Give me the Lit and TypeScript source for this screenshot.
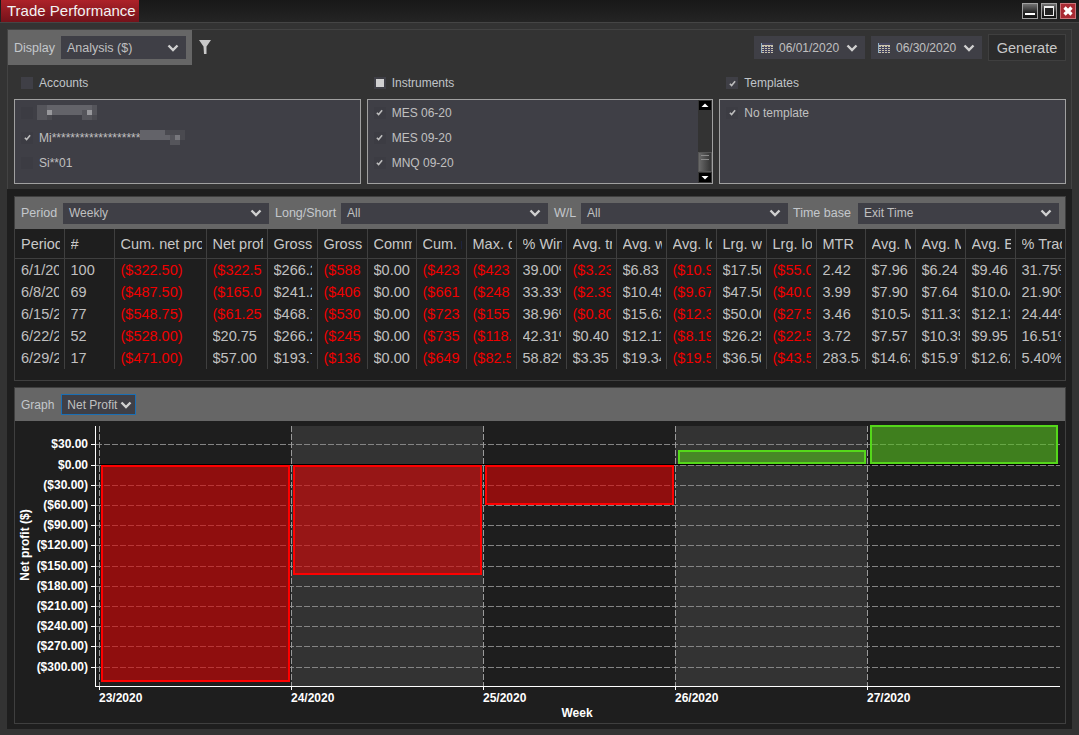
import { LitElement, css, html, svg } from 'lit';
import { customElement } from 'lit/decorators.js';

const widths = [49, 50, 92, 61, 50, 50, 49, 50, 50, 50, 50, 50, 50, 50, 50, 49, 50, 50, 50, 51];
const headers = ['Period', '#', 'Cum. net profit', 'Net profit', 'Gross profit', 'Gross loss', 'Commission', 'Cum. max', 'Max. drawdown', '% Win', 'Avg. trade', 'Avg. winner', 'Avg. loser', 'Lrg. winner', 'Lrg. loser', 'MTR', 'Avg. MAE', 'Avg. MFE', 'Avg. ETD', '% Trade'];
const rows = [
  ['6/1/2020', '100', '($322.50)', '($322.50)', '$266.25', '($588.75)', '$0.00', '($423.75)', '($423.75)', '39.00%', '($3.23)', '$6.83', '($10.95)', '$17.50', '($55.00)', '2.42', '$7.96', '$6.24', '$9.46', '31.75%'],
  ['6/8/2020', '69', '($487.50)', '($165.00)', '$241.25', '($406.25)', '$0.00', '($661.00)', '($248.75)', '33.33%', '($2.39)', '$10.49', '($9.67)', '$47.50', '($40.00)', '3.99', '$7.90', '$7.64', '$10.04', '21.90%'],
  ['6/15/2020', '77', '($548.75)', '($61.25)', '$468.75', '($530.00)', '$0.00', '($723.75)', '($155.00)', '38.96%', '($0.80)', '$15.63', '($12.38)', '$50.00', '($27.50)', '3.46', '$10.54', '$11.33', '$12.13', '24.44%'],
  ['6/22/2020', '52', '($528.00)', '$20.75', '$266.25', '($245.50)', '$0.00', '($735.50)', '($118.75)', '42.31%', '$0.40', '$12.11', '($8.19)', '$26.25', '($22.50)', '3.72', '$7.57', '$10.35', '$9.95', '16.51%'],
  ['6/29/2020', '17', '($471.00)', '$57.00', '$193.75', '($136.75)', '$0.00', '($649.00)', '($82.50)', '58.82%', '$3.35', '$19.34', '($19.50)', '$36.50', '($43.50)', '283.54', '$14.63', '$15.97', '$12.62', '5.40%'],
];

const yTicks = [30, 0, -30, -60, -90, -120, -150, -180, -210, -240, -270, -300];
const yPos = (v: number) => Math.round(464.5 - v * 0.674);
const yLabel = (v: number) => (v < 0 ? `($${-v}.00)` : `$${v}.00`);
const weeks = ['23/2020', '24/2020', '25/2020', '26/2020', '27/2020'];
const weekX = [99, 291, 483, 675, 867];

// x, y, w, h of each bar's outer box
const bars = [
  { x: 101, y: 465, w: 189, h: 217, neg: true },
  { x: 293, y: 465, w: 189, h: 110, neg: true },
  { x: 485, y: 465, w: 189, h: 40, neg: true },
  { x: 678, y: 450, w: 188, h: 14, neg: false },
  { x: 870, y: 425, w: 188, h: 39, neg: false },
];

const chevron = html`<svg class="chev" width="12" height="8" viewBox="0 0 12 8"><path d="M1.500 1.500 6 6l4.500-4.500" fill="none" stroke="#d0d0d0" stroke-width="2.400"/></svg>`;
const check = html`<svg width="7" height="7" viewBox="0 0 8 8"><path d="M1 4.200 3 6.400 7 1.400" fill="none" stroke="#bdbdbd" stroke-width="1.800"/></svg>`;
const calendar = html`<svg width="12" height="10" viewBox="0 0 12 10" shape-rendering="crispEdges">
  <rect width="12" height="10" fill="#c9c2ab"/>
  <rect width="12" height="2" fill="#45455f"/>
  <rect width="1" height="10" fill="#8fb0c8"/>
  <path d="M1 4.500h11M1 6.500h11M1 8.500h11M3.500 3v7M6.500 3v7M9.500 3v7" stroke="#45455f" stroke-width="1"/>
</svg>`;

// pixelated patch that hides part of an account name
const mosaic = (cols: string[][]) => html`<svg class="mosaic" width=${cols[0].length * 5} height=${cols.length * 5} shape-rendering="crispEdges">
  ${cols.map((r, y) => r.map((c, x) => svg`<rect x=${x * 5} y=${y * 5} width="5" height="5" fill=${c}/>`))}
</svg>`;
const a = '#55555b', b = '#636369', c = '#77777c', d = '#4a4a50', e = '#3f3f46', f = '#98989c';
const patchOne = [
  [a, a, b, b, b, b, b, b, b, b, b, a],
  [a, a, f, b, b, b, b, b, b, a, f, a],
  [a, a, d, e, e, e, e, e, e, a, a, d],
];
const patchTwo = [
  [b, b, b, b, b, d, d, d, d],
  [b, b, b, b, b, b, a, c, d],
  [e, e, e, e, e, e, a, a, e],
];

@customElement('app-root')
export class AppRoot extends LitElement {
  static override styles = css`
    :host {
      display: block;
      width: 1079px;
      height: 735px;
      overflow: hidden;
      background: #333;
      font-family: 'Liberation Sans', Arial, sans-serif;
      font-size: 12px;
      color: #c0c0c0;
    }
    .title {
      height: 22px;
      border-bottom: 1px solid #454545;
      background: linear-gradient(#181818, #242424);
      display: flex;
      justify-content: space-between;
    }
    .tab {
      margin-left: 1px;
      width: 132px;
      padding-left: 6px;
      background: linear-gradient(#ad2229, #74121a);
      color: #f2f2f2;
      font-size: 15px;
      line-height: 22px;
      white-space: nowrap;
    }
    .win { display: flex; gap: 3px; padding: 3px 3px 0 0; }
    .win svg { display: block; }
    .top {
      margin: 6px 7px 0;
      height: 160px;
      box-sizing: border-box;
      border-top: 1px solid #434343;
      border-left: 1px solid #434343;
      border-right: 1px solid #434343;
      display: flex;
      flex-direction: column;
    }
    .bar1 { display: flex; align-items: flex-start; height: 35px; }
    .display {
      width: 184px;
      height: 35px;
      box-sizing: border-box;
      background: #666;
      display: flex;
      align-items: center;
      padding: 0 6px;
      gap: 6px;
      color: #c4c8cc;
      font-size: 12.500px;
    }
    .select {
      height: 23px;
      box-sizing: border-box;
      background: #3f3f46;
      color: #c0c0c0;
      display: flex;
      align-items: center;
      justify-content: space-between;
      padding: 0 7px 0 6px;
      font-size: 12px;
      white-space: nowrap;
    }
    .chev { flex: none; }
    .display .select { width: 125px; font-size: 12.500px; }
    .filter { margin: 10px 0 0 7px; display: block; }
    .dates { margin-left: auto; display: flex; gap: 6px; padding: 6px 5px 0 0; align-items: flex-start; }
    .date { width: 111px; justify-content: flex-start; gap: 6px; padding: 0 7px; }
    .date .chev { margin-left: auto; }
    .generate {
      width: 78px;
      height: 27px;
      box-sizing: border-box;
      margin-top: -2px;
      border: 1px solid #3f3f3f;
      background: #2b2b2b;
      color: #c8c8c8;
      font-size: 14.500px;
      display: flex;
      align-items: center;
      justify-content: center;
    }
    .lists {
      display: grid;
      grid-template-columns: repeat(3, 1fr);
      column-gap: 6px;
      padding: 9px 5px 0 6px;
    }
    .head {
      display: flex;
      align-items: center;
      gap: 6px;
      padding-left: 7px;
      height: 18px;
      margin-bottom: 7px;
      color: #c0c4c8;
    }
    .box {
      width: 12px;
      height: 12px;
      background: #3f3f46;
      display: flex;
      align-items: center;
      justify-content: center;
      flex: none;
    }
    .box.dim { background: #3c3c43; }
    .box i { width: 8px; height: 8px; background: #d0d0d0; display: block; }
    .list {
      height: 85px;
      box-sizing: border-box;
      border: 1px solid #a0a0a0;
      background: #3f3f46;
      position: relative;
      overflow: hidden;
    }
    .item {
      height: 25px;
      display: flex;
      align-items: center;
      gap: 6px;
      padding-left: 6px;
      color: #c0c0c0;
    }
    .mosaic { display: block; }
    .masked { display: flex; align-items: center; }
    .item .lead { margin-left: -2px; }
    .scroll {
      position: absolute;
      top: 0;
      right: 0;
      bottom: 0;
      width: 14px;
      background: #333;
      display: flex;
      flex-direction: column;
      align-items: center;
      padding: 1px 0;
      box-sizing: border-box;
    }
    .scroll svg { display: block; }
    .thumb {
      margin-top: auto;
      margin-bottom: 1px;
      width: 14px;
      height: 20px;
      box-sizing: border-box;
      border: 1px solid #555;
      background: linear-gradient(90deg, #6a6a6a, #333);
      display: flex;
      flex-direction: column;
      gap: 3px;
      padding: 2px 0 0 2px;
    }
    .thumb i { display: block; width: 8px; height: 1px; background: #8a8a8a; }
    .lower {
      height: 540px;
      box-sizing: border-box;
      margin: 0 7px;
      padding: 7px 6px 0 7px;
      background: #1e1e1e;
      display: flex;
      flex-direction: column;
      gap: 6px;
    }
    .panel {
      border: 1px solid #3f3f3f;
      background: #1e1e1e;
      display: flex;
      flex-direction: column;
    }
    .panel.stats { height: 185px; box-sizing: border-box; }
    .panel.graph { height: 337px; box-sizing: border-box; }
    .filters {
      height: 32px;
      background: #666;
      display: grid;
      grid-template-columns: 48px 206px 72px 207px 33px 207px 70px 201px;
      align-items: center;
      color: #c4c8cc;
      font-size: 12.500px;
    }
    .filters > span { padding-left: 6px; }
    .filters > span.tb { padding-left: 5px; }
    .filters .select { height: 21px; font-size: 12px; }
    table {
      border-collapse: collapse;
      table-layout: fixed;
      width: 1050px;
      font-size: 14.500px;
    }
    th, td {
      padding: 0;
      font-weight: normal;
      text-align: left;
      white-space: nowrap;
      border-right: 1px solid #3f3f3f;
    }
    th:last-child, td:last-child { border-right: none; }
    th { height: 29px; border-bottom: 1px solid #3f3f3f; color: #c8c8c8; }
    td { height: 22px; color: #c0c0c0; }
    .cell { margin: 0 5px 0 6px; overflow: hidden; }
    th .cell { margin-right: 4px; }
    td.neg { color: #f00000; }
    .graphbar {
      height: 33px;
      background: #666;
      display: flex;
      align-items: center;
      gap: 7px;
      padding-left: 6px;
      color: #c4c8cc;
    }
    .graphbar .select {
      width: 75px;
      height: 21px;
      border: 1px solid #1a6fb5;
      padding: 0 3px 0 5px;
    }
    .chart { display: block; }
    .chart text {
      font-family: 'Liberation Sans', Arial, sans-serif;
      font-size: 12px;
      font-weight: bold;
      fill: #fff;
    }
  `;

  private renderChart() {
    return html`<svg class="chart" width="1050" height="302" viewBox="15 421 1050 302">
      <g shape-rendering="crispEdges">
        <rect x="291" y="426" width="192" height="260" fill="#333"/>
        <rect x="675" y="426" width="192" height="260" fill="#333"/>
        ${yTicks.map((v) => svg`
          <line x1="96" x2="1060" y1=${yPos(v) + 0.5} y2=${yPos(v) + 0.5} stroke="#848484" stroke-dasharray="6 2"/>
          <line x1="91" x2="95" y1=${yPos(v) + 0.5} y2=${yPos(v) + 0.5} stroke="#fff"/>`)}
        ${weekX.map((x) => svg`
          <line x1=${x + 0.5} x2=${x + 0.5} y1="426" y2="686" stroke="#9a9a9a" stroke-dasharray="6 2"/>
          <line x1=${x + 0.5} x2=${x + 0.5} y1="686" y2="690" stroke="#fff"/>`)}
        <line x1="100" x2="1060" y1="464.500" y2="464.500" stroke="#000"/>
        ${bars.map((r) => svg`<rect x=${r.x + 1} y=${r.y + 1} width=${r.w - 2} height=${r.h - 2}
          fill=${r.neg ? 'rgba(218,3,3,.6)' : 'rgba(85,192,30,.6)'}
          stroke=${r.neg ? '#f00' : '#55d81a'} stroke-width="2"/>`)}
        <line x1="95.500" x2="95.500" y1="426" y2="687" stroke="#fff"/>
        <line x1="95" x2="1060" y1="686.500" y2="686.500" stroke="#fff"/>
      </g>
      ${yTicks.map((v) => svg`<text x="88" y=${yPos(v) + 4} text-anchor="end">${yLabel(v)}</text>`)}
      ${weeks.map((w, i) => svg`<text x=${weekX[i]} y="702">${w}</text>`)}
      <text x="577" y="717" text-anchor="middle">Week</text>
      <text transform="translate(29 545) rotate(-90)" text-anchor="middle">Net profit ($)</text>
    </svg>`;
  }

  override render() {
    return html`
      <div class="title">
        <div class="tab">Trade Performance</div>
        <div class="win">
          <svg width="16" height="16" shape-rendering="crispEdges">
            <defs><linearGradient id="wb" x1="0" y1="0" x2="0" y2="1"><stop offset="0" stop-color="#777"/><stop offset=".6" stop-color="#222"/><stop offset="1" stop-color="#111"/></linearGradient></defs>
            <rect x=".5" y=".5" width="15" height="15" fill="url(#wb)" stroke="#a0a0a0"/><rect x="3" y="10" width="10" height="2" fill="#fff"/>
          </svg>
          <svg width="16" height="16" shape-rendering="crispEdges">
            <rect x=".5" y=".5" width="15" height="15" fill="url(#wb)" stroke="#a0a0a0"/><rect x="3.500" y="3.500" width="9" height="9" fill="#222" stroke="#eee"/><rect x="3" y="3" width="10" height="2" fill="#eee"/>
          </svg>
          <svg width="16" height="16"><rect x=".5" y=".5" width="15" height="15" fill="#a92a33" stroke="#c9747a"/><path d="M4.500 4.500l7 7M11.500 4.500l-7 7" stroke="#fff" stroke-width="3.200"/></svg>
        </div>
      </div>

      <div class="top">
        <div class="bar1">
          <div class="display">Display <div class="select">Analysis ($) ${chevron}</div></div>
          <svg class="filter" width="12" height="14" viewBox="0 0 12 14"><path d="M0 0h12L7.500 6.500V14h-2.500L4.500 6.500z" fill="#c8c8c8"/></svg>
          <div class="dates">
            <div class="select date">${calendar} 06/01/2020 ${chevron}</div>
            <div class="select date">${calendar} 06/30/2020 ${chevron}</div>
            <div class="generate">Generate</div>
          </div>
        </div>
        <div class="lists">
          <div>
            <div class="head"><span class="box"></span>Accounts</div>
            <div class="list">
              <div class="item"><span class="box dim"></span><span class="lead">${mosaic(patchOne)}</span></div>
              <div class="item"><span class="box dim">${check}</span><span class="masked">Mi*******************${mosaic(patchTwo)}</span></div>
              <div class="item"><span class="box dim"></span>Si**01</div>
            </div>
          </div>
          <div>
            <div class="head"><span class="box"><i></i></span>Instruments</div>
            <div class="list">
              <div class="item"><span class="box dim">${check}</span>MES 06-20</div>
              <div class="item"><span class="box dim">${check}</span>MES 09-20</div>
              <div class="item"><span class="box dim">${check}</span>MNQ 09-20</div>
              <div class="scroll">
                <svg width="12" height="9"><rect width="12" height="9" fill="#000"/><path d="M6 2.500 9.500 6h-7z" fill="#fff"/></svg>
                <div class="thumb"><i></i><i></i></div>
                <svg width="12" height="9"><rect width="12" height="9" fill="#000"/><path d="M6 6.500 9.500 3h-7z" fill="#fff"/></svg>
              </div>
            </div>
          </div>
          <div>
            <div class="head"><span class="box">${check}</span>Templates</div>
            <div class="list">
              <div class="item"><span class="box dim">${check}</span>No template</div>
            </div>
          </div>
        </div>
      </div>

      <div class="lower">
        <div class="panel stats">
          <div class="filters">
            <span>Period</span><div class="select">Weekly ${chevron}</div>
            <span>Long/Short</span><div class="select">All ${chevron}</div>
            <span>W/L</span><div class="select">All ${chevron}</div>
            <span class="tb">Time base</span><div class="select">Exit Time ${chevron}</div>
          </div>
          <table>
            <colgroup>${widths.map((w) => html`<col style="width:${w}px" />`)}</colgroup>
            <thead><tr>${headers.map((h) => html`<th><div class="cell">${h}</div></th>`)}</tr></thead>
            <tbody>
              ${rows.map((r) => html`<tr>${r.map((v) => html`<td class=${v.startsWith('(') ? 'neg' : ''}><div class="cell">${v}</div></td>`)}</tr>`)}
            </tbody>
          </table>
        </div>
        <div class="panel graph">
          <div class="graphbar">Graph <div class="select">Net Profit ${chevron}</div></div>
          ${this.renderChart()}
        </div>
      </div>
    `;
  }
}
